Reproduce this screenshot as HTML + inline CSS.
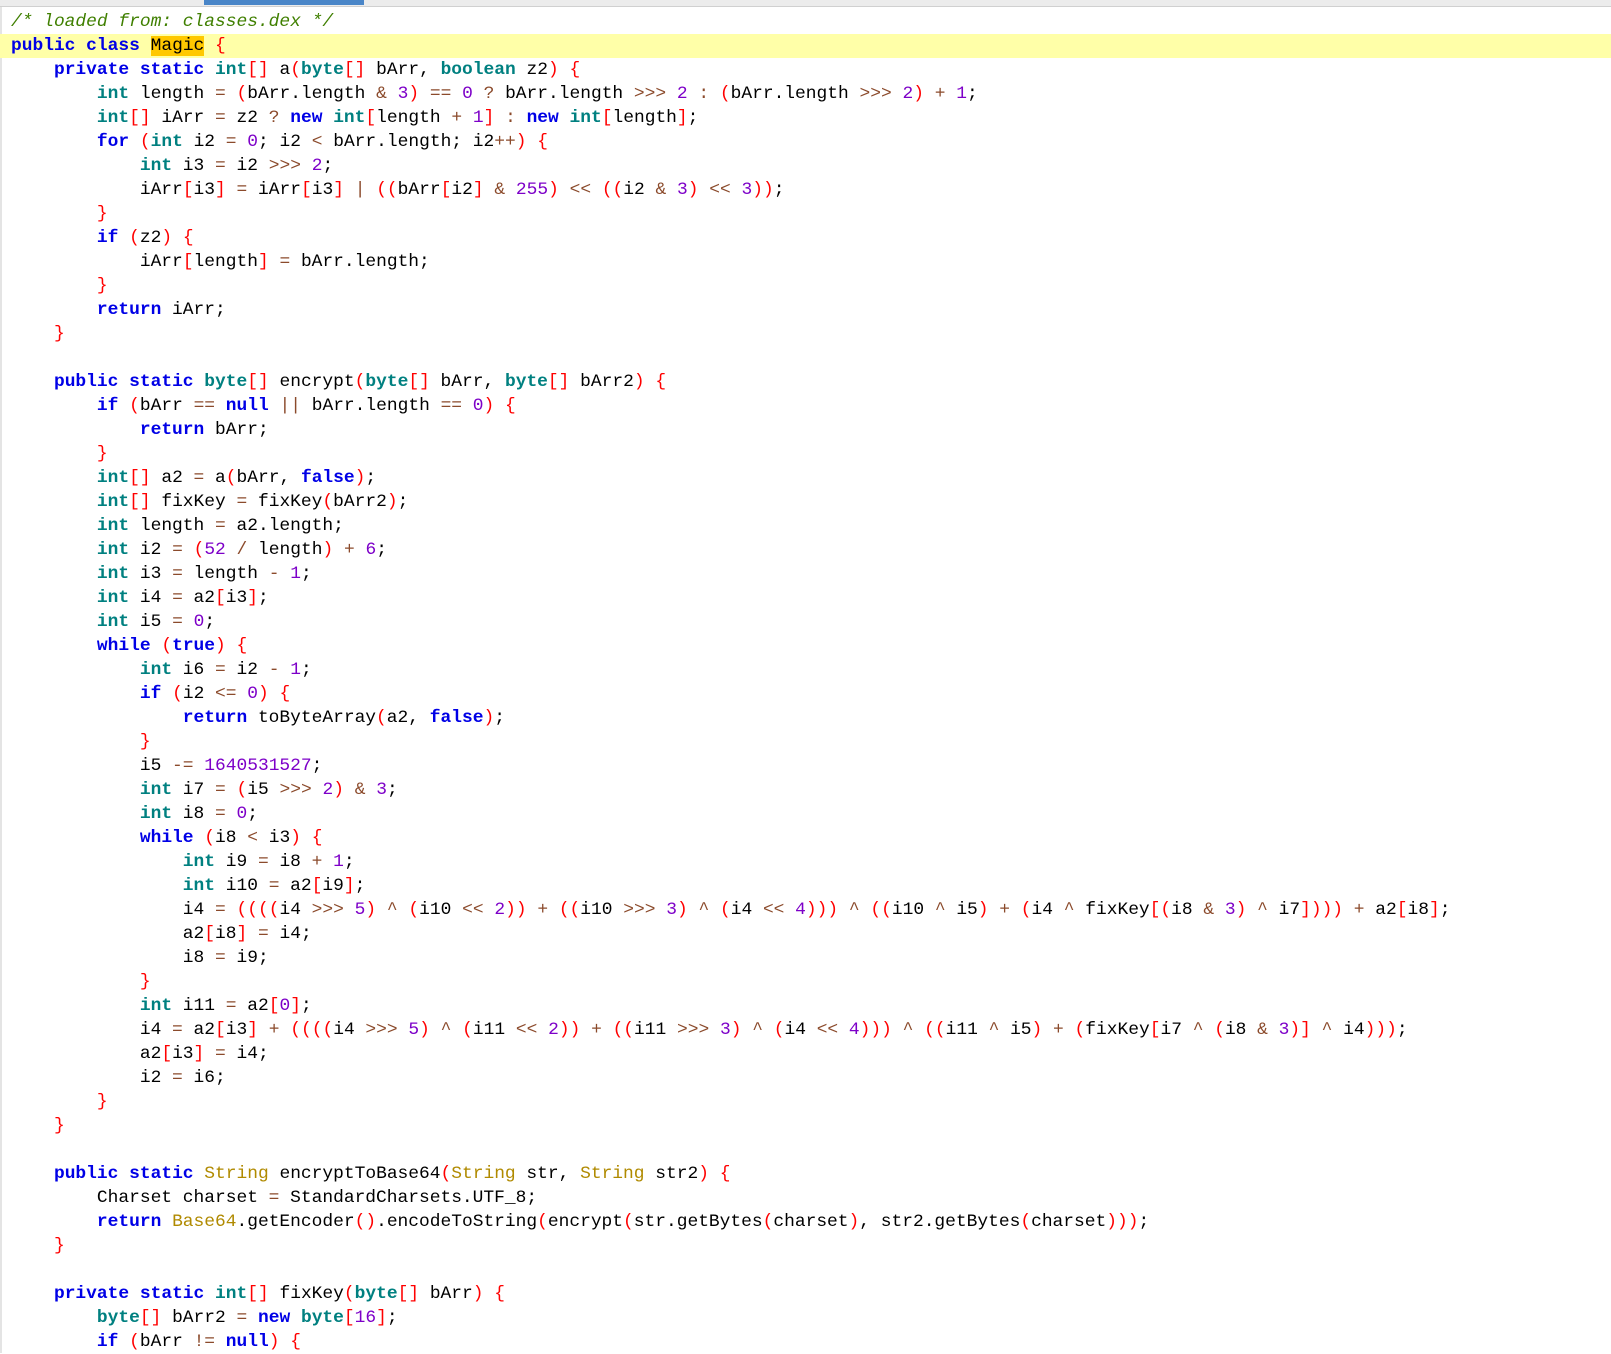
<!DOCTYPE html>
<html><head><meta charset="utf-8"><style>
html,body{margin:0;padding:0;background:#fff;width:1611px;height:1353px;overflow:hidden}
#top{position:absolute;left:0;top:0;width:1611px;height:6px;background:#ececec;border-bottom:1px solid #d0d0d0}
#bar{position:absolute;left:204px;top:0;width:160px;height:5px;background:#4a86c8}
#lb{position:absolute;left:0;top:7px;width:2px;height:1346px;background:#e4e4e4}
#code{position:absolute;left:11px;top:10px;font-family:"Liberation Mono",monospace;font-size:17.9px;line-height:24px;white-space:pre;color:#000}
.l{height:24px}
.hl{background:#ffffa8;margin-left:-11px;padding-left:11px;width:1600px}
k{color:#0000e6;font-weight:bold}
t{color:#008080;font-weight:bold}
y{color:#b08a00}
r{color:#f00}
n{color:#7d00c8}
o{color:#8b4a2b}
c{color:#3f7f00;font-style:italic}
m{background:#ffc800}
</style></head><body>
<div id="top"></div><div id="bar"></div><div id="lb"></div>
<div id="code"><div class="l"><c>/* loaded from: classes.dex */</c></div><div class="l hl"><k>public</k> <k>class</k> <m>Magic</m> <r>{</r></div><div class="l">    <k>private</k> <k>static</k> <t>int</t><r>[]</r> a<r>(</r><t>byte</t><r>[]</r> bArr, <t>boolean</t> z2<r>)</r> <r>{</r></div><div class="l">        <t>int</t> length <o>=</o> <r>(</r>bArr.length <o>&amp;</o> <n>3</n><r>)</r> <o>==</o> <n>0</n> <o>?</o> bArr.length <o>&gt;&gt;&gt;</o> <n>2</n> <o>:</o> <r>(</r>bArr.length <o>&gt;&gt;&gt;</o> <n>2</n><r>)</r> <o>+</o> <n>1</n>;</div><div class="l">        <t>int</t><r>[]</r> iArr <o>=</o> z2 <o>?</o> <k>new</k> <t>int</t><r>[</r>length <o>+</o> <n>1</n><r>]</r> <o>:</o> <k>new</k> <t>int</t><r>[</r>length<r>]</r>;</div><div class="l">        <k>for</k> <r>(</r><t>int</t> i2 <o>=</o> <n>0</n>; i2 <o>&lt;</o> bArr.length; i2<o>++</o><r>)</r> <r>{</r></div><div class="l">            <t>int</t> i3 <o>=</o> i2 <o>&gt;&gt;&gt;</o> <n>2</n>;</div><div class="l">            iArr<r>[</r>i3<r>]</r> <o>=</o> iArr<r>[</r>i3<r>]</r> <o>|</o> <r>((</r>bArr<r>[</r>i2<r>]</r> <o>&amp;</o> <n>255</n><r>)</r> <o>&lt;&lt;</o> <r>((</r>i2 <o>&amp;</o> <n>3</n><r>)</r> <o>&lt;&lt;</o> <n>3</n><r>))</r>;</div><div class="l">        <r>}</r></div><div class="l">        <k>if</k> <r>(</r>z2<r>)</r> <r>{</r></div><div class="l">            iArr<r>[</r>length<r>]</r> <o>=</o> bArr.length;</div><div class="l">        <r>}</r></div><div class="l">        <k>return</k> iArr;</div><div class="l">    <r>}</r></div><div class="l"></div><div class="l">    <k>public</k> <k>static</k> <t>byte</t><r>[]</r> encrypt<r>(</r><t>byte</t><r>[]</r> bArr, <t>byte</t><r>[]</r> bArr2<r>)</r> <r>{</r></div><div class="l">        <k>if</k> <r>(</r>bArr <o>==</o> <k>null</k> <o>||</o> bArr.length <o>==</o> <n>0</n><r>)</r> <r>{</r></div><div class="l">            <k>return</k> bArr;</div><div class="l">        <r>}</r></div><div class="l">        <t>int</t><r>[]</r> a2 <o>=</o> a<r>(</r>bArr, <k>false</k><r>)</r>;</div><div class="l">        <t>int</t><r>[]</r> fixKey <o>=</o> fixKey<r>(</r>bArr2<r>)</r>;</div><div class="l">        <t>int</t> length <o>=</o> a2.length;</div><div class="l">        <t>int</t> i2 <o>=</o> <r>(</r><n>52</n> <o>/</o> length<r>)</r> <o>+</o> <n>6</n>;</div><div class="l">        <t>int</t> i3 <o>=</o> length <o>-</o> <n>1</n>;</div><div class="l">        <t>int</t> i4 <o>=</o> a2<r>[</r>i3<r>]</r>;</div><div class="l">        <t>int</t> i5 <o>=</o> <n>0</n>;</div><div class="l">        <k>while</k> <r>(</r><k>true</k><r>)</r> <r>{</r></div><div class="l">            <t>int</t> i6 <o>=</o> i2 <o>-</o> <n>1</n>;</div><div class="l">            <k>if</k> <r>(</r>i2 <o>&lt;=</o> <n>0</n><r>)</r> <r>{</r></div><div class="l">                <k>return</k> toByteArray<r>(</r>a2, <k>false</k><r>)</r>;</div><div class="l">            <r>}</r></div><div class="l">            i5 <o>-=</o> <n>1640531527</n>;</div><div class="l">            <t>int</t> i7 <o>=</o> <r>(</r>i5 <o>&gt;&gt;&gt;</o> <n>2</n><r>)</r> <o>&amp;</o> <n>3</n>;</div><div class="l">            <t>int</t> i8 <o>=</o> <n>0</n>;</div><div class="l">            <k>while</k> <r>(</r>i8 <o>&lt;</o> i3<r>)</r> <r>{</r></div><div class="l">                <t>int</t> i9 <o>=</o> i8 <o>+</o> <n>1</n>;</div><div class="l">                <t>int</t> i10 <o>=</o> a2<r>[</r>i9<r>]</r>;</div><div class="l">                i4 <o>=</o> <r>((((</r>i4 <o>&gt;&gt;&gt;</o> <n>5</n><r>)</r> <o>^</o> <r>(</r>i10 <o>&lt;&lt;</o> <n>2</n><r>))</r> <o>+</o> <r>((</r>i10 <o>&gt;&gt;&gt;</o> <n>3</n><r>)</r> <o>^</o> <r>(</r>i4 <o>&lt;&lt;</o> <n>4</n><r>)))</r> <o>^</o> <r>((</r>i10 <o>^</o> i5<r>)</r> <o>+</o> <r>(</r>i4 <o>^</o> fixKey<r>[(</r>i8 <o>&amp;</o> <n>3</n><r>)</r> <o>^</o> i7<r>])))</r> <o>+</o> a2<r>[</r>i8<r>]</r>;</div><div class="l">                a2<r>[</r>i8<r>]</r> <o>=</o> i4;</div><div class="l">                i8 <o>=</o> i9;</div><div class="l">            <r>}</r></div><div class="l">            <t>int</t> i11 <o>=</o> a2<r>[</r><n>0</n><r>]</r>;</div><div class="l">            i4 <o>=</o> a2<r>[</r>i3<r>]</r> <o>+</o> <r>((((</r>i4 <o>&gt;&gt;&gt;</o> <n>5</n><r>)</r> <o>^</o> <r>(</r>i11 <o>&lt;&lt;</o> <n>2</n><r>))</r> <o>+</o> <r>((</r>i11 <o>&gt;&gt;&gt;</o> <n>3</n><r>)</r> <o>^</o> <r>(</r>i4 <o>&lt;&lt;</o> <n>4</n><r>)))</r> <o>^</o> <r>((</r>i11 <o>^</o> i5<r>)</r> <o>+</o> <r>(</r>fixKey<r>[</r>i7 <o>^</o> <r>(</r>i8 <o>&amp;</o> <n>3</n><r>)]</r> <o>^</o> i4<r>)))</r>;</div><div class="l">            a2<r>[</r>i3<r>]</r> <o>=</o> i4;</div><div class="l">            i2 <o>=</o> i6;</div><div class="l">        <r>}</r></div><div class="l">    <r>}</r></div><div class="l"></div><div class="l">    <k>public</k> <k>static</k> <y>String</y> encryptToBase64<r>(</r><y>String</y> str, <y>String</y> str2<r>)</r> <r>{</r></div><div class="l">        Charset charset <o>=</o> StandardCharsets.UTF_8;</div><div class="l">        <k>return</k> <y>Base64</y>.getEncoder<r>()</r>.encodeToString<r>(</r>encrypt<r>(</r>str.getBytes<r>(</r>charset<r>)</r>, str2.getBytes<r>(</r>charset<r>)))</r>;</div><div class="l">    <r>}</r></div><div class="l"></div><div class="l">    <k>private</k> <k>static</k> <t>int</t><r>[]</r> fixKey<r>(</r><t>byte</t><r>[]</r> bArr<r>)</r> <r>{</r></div><div class="l">        <t>byte</t><r>[]</r> bArr2 <o>=</o> <k>new</k> <t>byte</t><r>[</r><n>16</n><r>]</r>;</div><div class="l">        <k>if</k> <r>(</r>bArr <o>!=</o> <k>null</k><r>)</r> <r>{</r></div></div>
</body></html>
